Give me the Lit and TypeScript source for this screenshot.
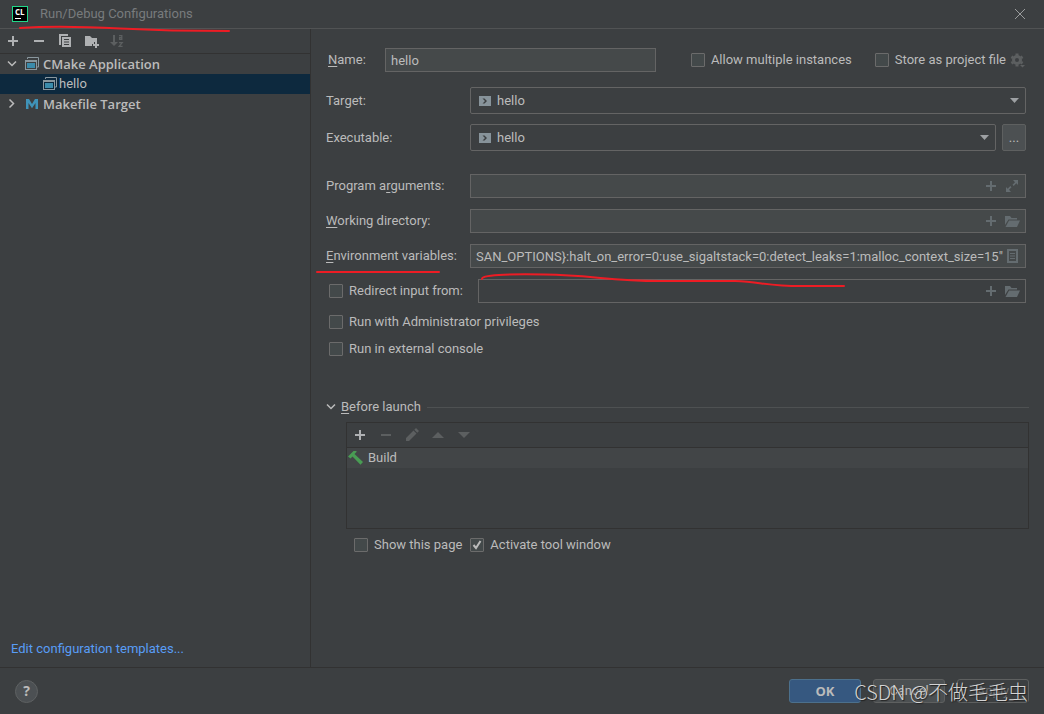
import { LitElement, html, css, svg } from "lit";
import { customElement } from "lit/decorators.js";

const icon = (body: unknown, cls = "") =>
  html`<svg class="icon ${cls}" width="16" height="16" viewBox="0 0 16 16" aria-hidden="true">${body}</svg>`;

const plus = svg`<path fill="currentColor" d="M7 3h2v4h4v2H9v4H7V9H3V7h4z"/>`;
const minus = svg`<path fill="currentColor" d="M3 7h10v2H3z"/>`;
const copy = svg`<path fill="currentColor" fill-rule="evenodd" d="M2 1h9v2H4v9H2zM5 4h9v10H5zM7 6v1h5V6zM7 8.500v1h5v-1zM7 11v1h5v-1z"/>`;
const folderPlus = svg`<path fill="currentColor" d="M2 3h5l2 2h5v4h-3v2H9v2H2z"/><path fill="currentColor" d="M12 9h2v2h2v2h-2v2h-2v-2h-2v-2h2z"/>`;
const sort = svg`<path fill="currentColor" d="M4 2h2v7h3l-4 4-4-4h3z"/><path fill="none" stroke="currentColor" stroke-width="1.300" d="M10 2.600h2.800V7M12.800 4.600H10.600v1.800h2.200M10 9.600h3.200l-3 3.800h3.400"/>`;
const chevDown = svg`<path fill="none" stroke="currentColor" stroke-width="1.500" d="M4 5.500l4 4 4-4"/>`;
const chevRight = svg`<path fill="none" stroke="currentColor" stroke-width="1.500" d="M5.500 3.500l4 4-4 4"/>`;
const appIcon = svg`<path fill="none" stroke="#8a979e" d="M3.500 3V1.500h11v9.500H13"/><path fill="#8a979e" fill-rule="evenodd" d="M1 4h12v10H1zM2 6v7h10V6z"/><path fill="#3b8bab" d="M3 7h8v5H3z"/>`;
const makeIcon = svg`<path fill="#3f93b8" d="M2 13V3h3l3 5 3-5h3v10h-2.500V7L8 12.200 4.500 7v6z"/>`;
const runIcon = svg`<path fill="#87939a" fill-rule="evenodd" d="M2 3h12v10H2zM5.500 5.500L8 8l-2.500 2.500h2L10 8 7.500 5.500z"/>`;
const expand = svg`<path fill="currentColor" d="M9 2h5v5l-1.700-1.700-2.600 2.600-1.200-1.200 2.500-2.500zM7 14H2V9l1.700 1.700 2.600-2.600 1.200 1.200-2.500 2.500z"/>`;
const folder = svg`<path fill="currentColor" d="M1 3h5l1.500 2H13v1.500H4.500L1 12z"/><path fill="currentColor" d="M5 7.500h11L13 14H1.500z"/>`;
const list = svg`<path fill="currentColor" fill-rule="evenodd" d="M3 1h11v14H3zM5 3v10h7V3z"/><path fill="currentColor" d="M6 5h5v1H6zM6 7.500h5v1H6zM6 10h5v1H6z"/>`;
const pencil = svg`<path fill="currentColor" d="M2 14v-3l7.500-7.500 3 3L5 14zM10.300 2.700L12 1l3 3-1.700 1.700z"/>`;
const up = svg`<path fill="currentColor" d="M8 5l6 6H2z"/>`;
const down = svg`<path fill="currentColor" d="M2 5h12l-6 6z"/>`;
const hammer = svg`<path fill="#499c54" d="M0 6.500L5.500 1H8.500v1L6.500 4 15 12l-2.500 2.700L4.500 6.500 2.500 8.500z"/>`;
const gear = svg`<circle cx="7" cy="8" r="3.500" fill="none" stroke="currentColor" stroke-width="3"/><path stroke="currentColor" stroke-width="3" d="M7 1.500v2M7 12.500v2M1.400 4.800l1.700 1M10.900 10.200l1.700 1M1.400 11.200l1.700-1M10.900 5.800l1.700-1"/><path fill="currentColor" d="M10 13h5l-2.500 2.500z"/>`;

@customElement("app-root")
export class AppRoot extends LitElement {
  static styles = css`
    :host {
      display: grid;
      grid-template-rows: auto 1fr auto;
      position: relative;
      min-height: 100vh;
      background: #3c3f41;
      color: #bbbbbb;
      font: 13px/20px Roboto, "Noto Sans CJK SC", sans-serif;
    }
    * { box-sizing: border-box; }
    button, input, select { font: inherit; color: inherit; margin: 0; }
    .icon { display: block; flex: none; }
    .titlebar {
      display: flex; align-items: center; gap: 12px;
      height: 29px; padding: 0 16px 0 12px;
      border-bottom: 1px solid #515354;
      color: #787b7d;
    }
    .logo {
      width: 16px; height: 16px; padding: 1px 2px;
      background: #000; border: 1px solid #21d789; color: #fff;
      font: bold 8px/8px "Open Sans", sans-serif;
    }
    .logo::after { content: ""; display: block; width: 6px; height: 1px; margin-top: 2px; background: #fff; }
    .title { flex: 1; font-weight: normal; font-size: 13px; margin: 0; }
    .plain { display: block; border: 0; padding: 0; background: none; }
    .body { display: grid; grid-template-columns: 311px minmax(0, 1fr); }
    .side { display: flex; flex-direction: column; border-right: 1px solid #323232; }
    .tools { display: flex; align-items: center; gap: 10px; height: 25px; padding: 0 5px; border-bottom: 1px solid #323232; color: #afb1b3; }
    .off { color: #5c5f60; }
    .tree { flex: 1; margin: 0; padding: 0; list-style: none; }
    .node { display: flex; align-items: center; height: 20px; padding-left: 4px; }
    .node .label { padding-left: 3px; }
    .node .kind { margin-left: 4px; }
    .bold { font-family: "Open Sans", sans-serif; font-weight: 600; }
    .child { padding-left: 42px; background: #0d293e; }
    .child .label { padding-left: 1px; }
    .link { padding: 0 11px; margin-bottom: 8px; color: #589df6; text-decoration: none; }
    .main { padding: 19px 15px 0; }
    .form { padding-right: 3px; }
    .row { display: grid; grid-template-columns: 144px minmax(0, 1fr); align-items: center; margin-bottom: 11px; }
    .name { display: flex; align-items: center; margin-bottom: 15px; padding-left: 2px; }
    .name .caption { width: 57px; }
    .name .box { flex: 0 1 271px; }
    .name .first { margin: 0 23px 0 auto; }
    .name .off { margin-left: 4px; }
    .combo { margin-bottom: 10px; }
    .spaced { margin-bottom: 23px; }
    u { text-underline-offset: 2px; }
    .box { display: flex; align-items: center; height: 24px; padding-right: 5px; border: 1px solid #646464; background: #45494a; color: #646c70; }
    .box .plain + .plain { margin-left: 5px; }
    .box.disabled { background: none; }
    .text { flex: 1; min-width: 0; height: 22px; padding: 0 0 0 5px; border: 0; outline: 0; background: none; color: #bbbbbb; }
    .pick { display: flex; gap: 6px; }
    .select { display: grid; flex: 1; align-items: center; }
    .select > * { grid-area: 1 / 1; }
    .select .icon { margin-left: 7px; pointer-events: none; }
    .select .arrow { justify-self: end; margin: 0 7px 0 0; color: #9da0a3; }
    select { appearance: none; width: 100%; height: 27px; padding: 0 24px 0 26px; border: 1px solid #646464; border-radius: 2px; background: none; }
    .more { width: 24px; height: 27px; padding: 0; border: 1px solid #5e6060; border-radius: 2px; background: #4c5052; }
    .check { display: flex; align-items: center; gap: 6px; height: 20px; }
    .check input { appearance: none; width: 14px; height: 14px; border: 1px solid #6b6b6b; border-radius: 1px; background: #43494a; }
    .tick { display: grid; }
    .tick > * { grid-area: 1 / 1; }
    .tick svg { pointer-events: none; }
    .redirect { display: flex; align-items: center; margin-bottom: 9px; padding-left: 3px; }
    .redirect .check { width: 149px; }
    .redirect .box { flex: 1; }
    .option { margin-bottom: 7px; padding-left: 3px; }
    .section { display: flex; align-items: center; margin: 38px 0 5px; gap: 2px; }
    .section .icon { margin-left: -3px; }
    .section h2 { margin: 0; font: inherit; }
    .rule { flex: 1; height: 1px; margin-left: 4px; background: #4e5152; }
    .tasks { height: 107px; margin: 0 0 6px 20px; border: 1px solid #323232; }
    .task { display: flex; align-items: center; gap: 4px; height: 20px; padding-left: 1px; background: #424547; }
    .after { display: flex; gap: 8px; padding-left: 28px; }
    .footer { display: flex; align-items: center; gap: 12px; height: 47px; padding: 0 15px; border-top: 1px solid #323232; }
    .help { width: 23px; height: 23px; margin-right: auto; padding: 0; border: 1px solid #5e6162; border-radius: 50%; background: #4c5053; font: bold 14px/20px "Noto Sans", sans-serif; }
    .btn { width: 72px; height: 24px; padding: 0; border: 1px solid #5e6060; border-radius: 3px; background: #4c5052; }
    .primary { border-color: #4c708c; background: #365880; font-family: "Open Sans", sans-serif; font-weight: bold; }
    .apply { background: none; color: #6e7072; }
    .mark { position: absolute; right: 16px; bottom: 8px; color: #d4d4d4; font: 300 20px/28px "Noto Sans CJK SC", sans-serif; text-shadow: 1px 1px 1px #222; white-space: nowrap; pointer-events: none; }
    .ink { position: absolute; left: 0; top: 0; pointer-events: none; }
  `;

  private check(label: string, checked = false) {
    return html`<label class="check">
      <span class="tick"><input type="checkbox" ?checked=${checked} />${checked
        ? html`<svg width="14" height="14" viewBox="0 0 14 14" aria-hidden="true"><path fill="none" stroke="#bbbbbb" stroke-width="2" d="M3.500 7l2.500 3 4.500-7"/></svg>`
        : ""}</span>${label}</label>`;
  }

  private select(id: string) {
    return html`<span class="select"><select id=${id}><option>hello</option></select>${icon(runIcon)}
      <svg class="icon arrow" width="9" height="5" viewBox="0 0 9 5" aria-hidden="true"><path fill="currentColor" d="M0 0h9L4.500 5z"/></svg></span>`;
  }

  private tool(body: unknown, label: string, off = false) {
    return html`<button class="plain ${off ? "off" : ""}" aria-label=${label} ?disabled=${off}>${icon(body)}</button>`;
  }

  render() {
    return html`
      <header class="titlebar">
        <span class="logo">CL</span>
        <h1 class="title">Run/Debug Configurations</h1>
        <button class="plain" aria-label="Close"><svg class="icon" width="16" height="16" viewBox="0 0 16 16"><path fill="none" stroke="#9a9c9d" d="M3 3l10 10M13 3L3 13"/></svg></button>
      </header>
      <div class="body">
        <aside class="side">
          <div class="tools">
            ${this.tool(plus, "Add")}${this.tool(minus, "Remove")}${this.tool(copy, "Copy")}${this.tool(folderPlus, "New folder")}${this.tool(sort, "Sort", true)}
          </div>
          <ul class="tree">
            <li class="node bold">${icon(chevDown)}${icon(appIcon, "kind")}<span class="label">CMake Application</span></li>
            <li class="node child">${icon(appIcon)}<span class="label">hello</span></li>
            <li class="node bold">${icon(chevRight)}${icon(makeIcon, "kind")}<span class="label">Makefile Target</span></li>
          </ul>
          <a class="link" href="#">Edit configuration templates...</a>
        </aside>
        <main class="main">
          <div class="form">
            <div class="name">
              <label class="caption" for="name"><u>N</u>ame:</label>
              <span class="box"><input class="text" id="name" value="hello" /></span>
              <span class="first">${this.check("Allow multiple instances")}</span>
              ${this.check("Store as project file")}
              <span class="off">${icon(gear)}</span>
            </div>
            <div class="row combo"><label for="target">Target:</label>${this.select("target")}</div>
            <div class="row spaced"><label for="exe">Executable:</label>
              <span class="pick">${this.select("exe")}<button class="more">...</button></span></div>
            <div class="row"><label for="args">Program a<u>r</u>guments:</label>
              <span class="box"><input class="text" id="args" />${this.tool(plus, "Insert macro")}${this.tool(expand, "Expand")}</span></div>
            <div class="row"><label for="dir"><u>W</u>orking directory:</label>
              <span class="box"><input class="text" id="dir" />${this.tool(plus, "Insert macro")}${this.tool(folder, "Browse")}</span></div>
            <div class="row"><label for="env"><u>E</u>nvironment variables:</label>
              <span class="box"><input class="text" id="env" value='SAN_OPTIONS}:halt_on_error=0:use_sigaltstack=0:detect_leaks=1:malloc_context_size=15"' />${this.tool(list, "Edit variables")}</span></div>
            <div class="redirect">${this.check("Redirect input from:")}
              <span class="box disabled"><input class="text" aria-label="Input file" disabled />${this.tool(plus, "Insert macro")}${this.tool(folder, "Browse")}</span></div>
            <div class="option">${this.check("Run with Administrator privileges")}</div>
            <div class="option">${this.check("Run in external console")}</div>
          </div>
          <div class="section">${icon(chevDown)}<h2><u>B</u>efore launch</h2><span class="rule"></span></div>
          <div class="tasks">
            <div class="tools">
              ${this.tool(plus, "Add task")}${this.tool(minus, "Remove task", true)}${this.tool(pencil, "Edit task", true)}${this.tool(up, "Move up", true)}${this.tool(down, "Move down", true)}
            </div>
            <div class="task">${icon(hammer)}Build</div>
          </div>
          <div class="after">${this.check("Show this page")}${this.check("Activate tool window", true)}</div>
        </main>
      </div>
      <footer class="footer">
        <button class="help" aria-label="Help">?</button>
        <button class="btn primary">OK</button>
        <button class="btn">Cancel</button>
        <button class="btn apply">Apply</button>
      </footer>
      <span class="mark">CSDN @不做毛毛虫</span>
      <svg class="ink" width="860" height="300" viewBox="0 0 860 300" fill="none" stroke="#ed1c24" stroke-width="2" stroke-linecap="round" aria-hidden="true">
        <path d="M20 28C50 26 90 27 120 28.500S180 31 229 31"/>
        <path d="M317 272H439"/>
        <path d="M482 279C481 274 520 274 545 274.500C590 275 610 281 660 281H735C760 282 770 286 800 286H844"/>
      </svg>
    `;
  }
}
